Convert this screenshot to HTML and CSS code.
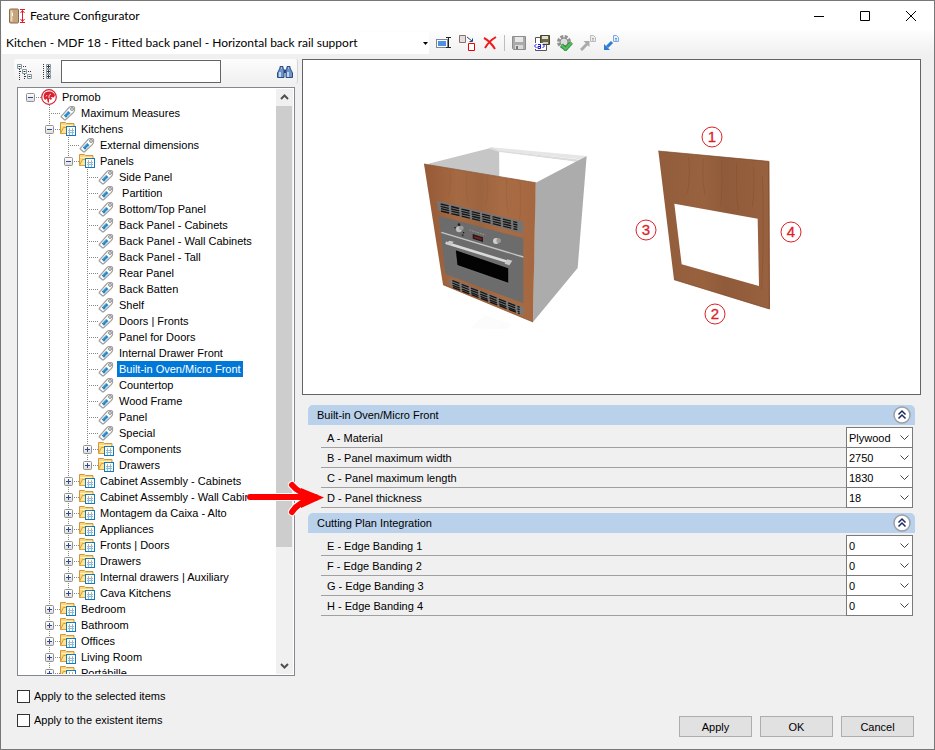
FILE: index.html
```html
<!DOCTYPE html>
<html lang="en">
<head>
<meta charset="UTF-8" />
<meta name="viewport" content="width=device-width, initial-scale=1" />
<title>Feature Configurator</title>
<link rel="stylesheet" href="styles.css">
</head>
<body>

<!-- shared icons -->
<svg class="sprite" aria-hidden="true">
  <linearGradient id="boxFill" x1="0" y1="0" x2="0" y2="1"><stop offset="0" stop-color="#fff"/><stop offset="1" stop-color="#dcdcdc"/></linearGradient>
  <linearGradient id="wood" x1="0" y1="0" x2="1" y2="0"><stop offset="0" stop-color="#955a36"/><stop offset=".3" stop-color="#a56a43"/><stop offset=".5" stop-color="#9c643f"/><stop offset=".7" stop-color="#a86c45"/><stop offset="1" stop-color="#a5673f"/></linearGradient>
  <linearGradient id="wood2" x1="0" y1="0" x2="1" y2="0"><stop offset="0" stop-color="#925d3c"/><stop offset=".4" stop-color="#98623f"/><stop offset=".6" stop-color="#905b3a"/><stop offset="1" stop-color="#98613f"/></linearGradient>
  <symbol id="minus" viewBox="0 0 9 9"><rect x=".5" y=".5" width="8" height="8" rx="1" fill="url(#boxFill)" stroke="#919191"/><path d="M2 4.500h5" stroke="#34488c"/></symbol>
  <symbol id="plus" viewBox="0 0 9 9"><rect x=".5" y=".5" width="8" height="8" rx="1" fill="url(#boxFill)" stroke="#919191"/><path d="M2 4.500h5M4.500 2v5" stroke="#34488c"/></symbol>
  <symbol id="tag" viewBox="0 0 16 16"><path d="M1.200 11.300 9 2.500 10.500 1.500H13.500L14.500 2.500V5.500L13.500 7.500 5.500 14.800H4.500L1.200 12Z" fill="#fdfdfd" stroke="#a0a0a0" stroke-width="1.200"/><circle cx="12" cy="4" r="1.400" fill="#fff" stroke="#808080"/><path d="M3.800 10.500 8.200 6 10.500 8.300 6 12.700Z" fill="#1b82c2"/><path d="m5 10.300 3.400-3.300M7 11l2.500-2.500" stroke="#74b9e2" stroke-width=".8"/></symbol>
  <symbol id="folder" viewBox="0 0 16 16"><path d="M.5 12.500V1.500h5l1 1h7.500V12.500Z" fill="#fbd77c" stroke="#d3963a"/><path d="M1 4.500h12" stroke="#fff0c0"/><path d="M.5 12.500 3.500 6.500H8V12.500Z" fill="#ffe598" stroke="#d89d3c"/><rect x="6.500" y="5.500" width="9" height="9" fill="#fff" stroke="#1479b8"/><path d="M8 9.500h6M8 11.500h6M9.500 8v6M12.500 8v6" stroke="#8dbbd9"/><path d="M9 7.500h1M12 7.500h1" stroke="#f2b43c"/></symbol>
  <symbol id="collapse" viewBox="0 0 18 18"><circle cx="9" cy="9" r="8" fill="#fff" stroke="#9aa0aa" stroke-width="1.500"/><path d="m5.500 8.500 3.500-3.500 3.500 3.500M5.500 12.500 9 9l3.500 3.500" fill="none" stroke="#1b2b62" stroke-width="1.500"/></symbol>
</svg>

<div class="window">
  <header class="titlebar">
    <svg class="app-icon" viewBox="0 0 18 16"><rect x=".5" y="1" width="9" height="14" rx="1" fill="#c6a57e" stroke="#8c6b4d"/><path d="M2.500 2.500v11" stroke="#ead5b9" stroke-width="2"/><path d="M3.500 5v3" stroke="#fff"/><path d="M11 1.500h5M11 14.500h5M13.500 2v12M11.500 5l2-2.500 2 2.500M11.500 11l2 2.500 2-2.500" fill="none" stroke="#df1b2c"/></svg>
    <h1>Feature Configurator</h1>
    <div class="window-buttons">
      <button aria-label="Minimize"><svg viewBox="0 0 10 10"><path d="M0 5.500h10"/></svg></button>
      <button aria-label="Maximize"><svg viewBox="0 0 10 10"><path d="M.5.5h9v9h-9Z"/></svg></button>
      <button aria-label="Close"><svg viewBox="0 0 10 10"><path d="m0 0 10 10M10 0 0 10"/></svg></button>
    </div>
  </header>

  <div class="toolbar">
    <select class="profile" aria-label="Profile">
      <option>Kitchen - MDF 18 - Fitted back panel - Horizontal back rail support</option>
    </select>
    <button aria-label="Rename"><svg viewBox="0 0 16 16"><rect x=".5" y="4.500" width="11" height="8" fill="#fff" stroke="#7c8896"/><rect x="2" y="6" width="8" height="5" fill="#4f8fe4"/><path d="M10 2.500h5M10 12.500h5M12.500 3v9" stroke="#222"/></svg></button>
    <button aria-label="Duplicate"><svg viewBox="0 0 16 16"><path d="M.5.500h6v7h-6Z" fill="#e2dede" stroke="#8a7070"/><path d="M9.500 8.500h6v7h-6Z" fill="#fff" stroke="#f00000"/><path d="m8 2 5 4M13.500 3.500V6.500H10.500" fill="none" stroke="#174b86"/></svg></button>
    <button aria-label="Delete"><svg viewBox="0 0 16 16"><path d="M2 3q6 3 11 11M14 2Q7 6 3 13" fill="none" stroke="#ef1b1b" stroke-width="2"/></svg></button>
    <span class="separator"></span>
    <button aria-label="Save"><svg viewBox="0 0 16 16"><path d="M1.500 1.500h13v13h-12l-1-1Z" fill="#aaa" stroke="#8c8c8c"/><path d="M4 2h8v5H4Z" fill="#e8e8e8"/><path d="M4 10h8v4H4Z" fill="#d9d9d9"/><path d="M5 11h2v3H5Z" fill="#777"/></svg></button>
    <button aria-label="Save as"><svg viewBox="0 0 16 16"><path d="M1.500 2.500h11v13h-11Z" fill="#fff" stroke="#555"/><path d="M6.500.500h9v9h-9Z" fill="#6b6b3d" stroke="#44442a"/><path d="M8 1h6v3H8Z" fill="#ddd"/><path d="M9 7h5v2H9Z" fill="#ccc"/><path d="M0 8h9v6H0Z" fill="#fff"/><path d="m2.500 9-2 2 2 2M8.500 9l2 2-2 2M4 9.500h2.500v4H4v-2h2" fill="none" stroke="#1414e0"/></svg></button>
    <button aria-label="Validate"><svg viewBox="0 0 16 16"><circle cx="7" cy="7" r="5.500" fill="none" stroke="#929292" stroke-width="3" stroke-dasharray="3 1.320"/><circle cx="7" cy="7" r="4" fill="#ddd" stroke="#888"/><path d="m4.500 10 4 4L14.500 7.500" fill="none" stroke="#2b8f38" stroke-width="4"/><path d="m4.500 10 4 4L14.500 7.500" fill="none" stroke="#57c05e" stroke-width="2"/></svg></button>
    <button aria-label="Import"><svg viewBox="0 0 16 16"><path d="m1 15 6-6" stroke="#aaa" stroke-width="3"/><path d="M3.500 6h6v6Z" fill="#aaa"/><path d="M10.500.500h3l2 2v4h-5Z" fill="#eee" stroke="#bbb"/><path d="M12 3.500h2M12 5h2" stroke="#aaa"/></svg></button>
    <button aria-label="Export"><svg viewBox="0 0 16 16"><path d="m9 7-5 5" stroke="#2e7bd6" stroke-width="3"/><path d="M1 9v6h6Z" fill="#2e7bd6"/><path d="M10.500.500h3l2 2v4h-5Z" fill="#e5f1ff" stroke="#7ba8e0"/><path d="M12 3.500h2M12 5h2" stroke="#6397da"/></svg></button>
  </div>

  <main class="content">
    <aside class="sidebar">
      <div class="search-bar">
        <button aria-label="Collapse all"><svg viewBox="0 0 16 16"><path d="M.500.500h4v4h-4ZM5.500 5.500h4v4h-4ZM10.500 10.500h4v4h-4Z" fill="#fff" stroke="#8599a6"/><path d="M1.500 2.500h2M6.500 7.500h2M11.500 12.500h2" stroke="#333"/><path d="M6 2.500h3M11 7.500h3M2.500 5v11M7.500 10v6M3 7.500h2M8 12.500h2" stroke="#333" stroke-dasharray="1 1"/></svg></button>
        <button aria-label="Expand all"><svg viewBox="0 0 16 16"><path d="M5.500.500h4v4h-4ZM5.500 5.500h4v4h-4ZM5.500 10.500h4v4h-4Z" fill="#fff" stroke="#8599a6"/><path d="M6 2.500h3M7.500 1v3M6 7.500h3M7.500 6v3M6 12.500h3M7.500 11v3" stroke="#333"/><path d="M2.500 0v15" stroke="#333" stroke-dasharray="1 1"/></svg></button>
        <input type="text" aria-label="Search">
        <button class="find" aria-label="Find"><svg viewBox="0 0 16 16"><path d="M.5 13.500V9L3 4V2.500h3V5h1v8.500ZM15.500 13.500V9L13 4V2.500h-3V5H9v8.500Z" fill="#6f93c8" stroke="#2b4c85"/><path d="M7 6h2v3H7Z" fill="#27477f"/><path d="M3 8v5M11 8v5" stroke="#dceafb" stroke-width="1.500"/><path d="M4 4h1M11 4h1" stroke="#dceafb"/></svg></button>
      </div>

      <div class="tree-box">
        <ul class="tree">
          <li>
            <div class="node"><button class="toggle" aria-label="Collapse"><svg><use href="#minus"/></svg></button><svg class="icon" viewBox="0 0 16 16"><circle cx="8" cy="8" r="7.300" fill="#fff" stroke="#d8202e" stroke-width="1.200"/><path d="M7 2.500C2.500 3 1.500 8 4 11L6 9.500 6.500 12.500 8 14V9.500l2 1.500 1-1.500-1.500-1.500 3.500.500L14 6 12.500 4 10 2.500Z" fill="#d8202e"/><path d="M8 9V6.500L10 5M6 6 5 7.500" fill="none" stroke="#fff" stroke-width=".8"/></svg><span>Promob</span></div>
            <ul>
              <li><div class="node leaf"><svg class="icon"><use href="#tag"/></svg><span>Maximum Measures</span></div></li>
              <li>
                <div class="node"><button class="toggle" aria-label="Collapse"><svg><use href="#minus"/></svg></button><svg class="icon"><use href="#folder"/></svg><span>Kitchens</span></div>
                <ul>
                  <li><div class="node leaf"><svg class="icon"><use href="#tag"/></svg><span>External dimensions</span></div></li>
                  <li>
                    <div class="node"><button class="toggle" aria-label="Collapse"><svg><use href="#minus"/></svg></button><svg class="icon"><use href="#folder"/></svg><span>Panels</span></div>
                    <ul>
                      <li><div class="node leaf"><svg class="icon"><use href="#tag"/></svg><span>Side Panel</span></div></li>
                      <li><div class="node leaf"><svg class="icon"><use href="#tag"/></svg><span>&nbsp;Partition</span></div></li>
                      <li><div class="node leaf"><svg class="icon"><use href="#tag"/></svg><span>Bottom/Top Panel</span></div></li>
                      <li><div class="node leaf"><svg class="icon"><use href="#tag"/></svg><span>Back Panel - Cabinets</span></div></li>
                      <li><div class="node leaf"><svg class="icon"><use href="#tag"/></svg><span>Back Panel - Wall Cabinets</span></div></li>
                      <li><div class="node leaf"><svg class="icon"><use href="#tag"/></svg><span>Back Panel - Tall</span></div></li>
                      <li><div class="node leaf"><svg class="icon"><use href="#tag"/></svg><span>Rear Panel</span></div></li>
                      <li><div class="node leaf"><svg class="icon"><use href="#tag"/></svg><span>Back Batten</span></div></li>
                      <li><div class="node leaf"><svg class="icon"><use href="#tag"/></svg><span>Shelf</span></div></li>
                      <li><div class="node leaf"><svg class="icon"><use href="#tag"/></svg><span>Doors | Fronts</span></div></li>
                      <li><div class="node leaf"><svg class="icon"><use href="#tag"/></svg><span>Panel for Doors</span></div></li>
                      <li><div class="node leaf"><svg class="icon"><use href="#tag"/></svg><span>Internal Drawer Front</span></div></li>
                      <li><div class="node leaf selected"><svg class="icon"><use href="#tag"/></svg><span>Built-in Oven/Micro Front</span></div></li>
                      <li><div class="node leaf"><svg class="icon"><use href="#tag"/></svg><span>Countertop</span></div></li>
                      <li><div class="node leaf"><svg class="icon"><use href="#tag"/></svg><span>Wood Frame</span></div></li>
                      <li><div class="node leaf"><svg class="icon"><use href="#tag"/></svg><span>Panel</span></div></li>
                      <li><div class="node leaf"><svg class="icon"><use href="#tag"/></svg><span>Special</span></div></li>
                      <li><div class="node"><button class="toggle" aria-label="Expand"><svg><use href="#plus"/></svg></button><svg class="icon"><use href="#folder"/></svg><span>Components</span></div></li>
                      <li><div class="node"><button class="toggle" aria-label="Expand"><svg><use href="#plus"/></svg></button><svg class="icon"><use href="#folder"/></svg><span>Drawers</span></div></li>
                    </ul>
                  </li>
                  <li><div class="node"><button class="toggle" aria-label="Expand"><svg><use href="#plus"/></svg></button><svg class="icon"><use href="#folder"/></svg><span>Cabinet Assembly - Cabinets</span></div></li>
                  <li><div class="node"><button class="toggle" aria-label="Expand"><svg><use href="#plus"/></svg></button><svg class="icon"><use href="#folder"/></svg><span>Cabinet Assembly - Wall Cabinets</span></div></li>
                  <li><div class="node"><button class="toggle" aria-label="Expand"><svg><use href="#plus"/></svg></button><svg class="icon"><use href="#folder"/></svg><span>Montagem da Caixa - Alto</span></div></li>
                  <li><div class="node"><button class="toggle" aria-label="Expand"><svg><use href="#plus"/></svg></button><svg class="icon"><use href="#folder"/></svg><span>Appliances</span></div></li>
                  <li><div class="node"><button class="toggle" aria-label="Expand"><svg><use href="#plus"/></svg></button><svg class="icon"><use href="#folder"/></svg><span>Fronts | Doors</span></div></li>
                  <li><div class="node"><button class="toggle" aria-label="Expand"><svg><use href="#plus"/></svg></button><svg class="icon"><use href="#folder"/></svg><span>Drawers</span></div></li>
                  <li><div class="node"><button class="toggle" aria-label="Expand"><svg><use href="#plus"/></svg></button><svg class="icon"><use href="#folder"/></svg><span>Internal drawers | Auxiliary</span></div></li>
                  <li><div class="node"><button class="toggle" aria-label="Expand"><svg><use href="#plus"/></svg></button><svg class="icon"><use href="#folder"/></svg><span>Cava Kitchens</span></div></li>
                </ul>
              </li>
              <li><div class="node"><button class="toggle" aria-label="Expand"><svg><use href="#plus"/></svg></button><svg class="icon"><use href="#folder"/></svg><span>Bedroom</span></div></li>
              <li><div class="node"><button class="toggle" aria-label="Expand"><svg><use href="#plus"/></svg></button><svg class="icon"><use href="#folder"/></svg><span>Bathroom</span></div></li>
              <li><div class="node"><button class="toggle" aria-label="Expand"><svg><use href="#plus"/></svg></button><svg class="icon"><use href="#folder"/></svg><span>Offices</span></div></li>
              <li><div class="node"><button class="toggle" aria-label="Expand"><svg><use href="#plus"/></svg></button><svg class="icon"><use href="#folder"/></svg><span>Living Room</span></div></li>
              <li><div class="node"><button class="toggle" aria-label="Expand"><svg><use href="#plus"/></svg></button><svg class="icon"><use href="#folder"/></svg><span>Portábille</span></div></li>
            </ul>
          </li>
        </ul>
        <div class="scrollbar">
          <svg viewBox="0 0 17 17"><path d="m5 10 3.500-3.500L12 10"/></svg>
          <div class="track"><div class="thumb"></div></div>
          <svg viewBox="0 0 17 17"><path d="m5 7 3.500 3.500L12 7"/></svg>
        </div>
      </div>
    </aside>

    <section class="details">
      <div class="preview">
        <svg viewBox="303 60 617 334" role="img" aria-label="Built-in oven front with numbered edges">
          <!-- cabinet -->
          <g transform="translate(410 120) scale(.33333)">
            <path d="M180 625 225 585 305 612 290 628Z" fill="#fcfcfc"/>
            <path d="M55 131 245 83 268 91V170L62 136Z" fill="#c6c6c6"/>
            <path d="m245 82 25 9 240 28-13 6-229-29-35-11Z" fill="#dcdcdc"/>
            <path d="m245 82 284 26-20 10-242-26Z" fill="#e6e6e6"/>
            <path d="m268 97 220 27-110 63-108-17Z" fill="#fff"/>
            <path d="m376 189 154-81-27 336-134 162Z" fill="#acacac"/>
            <path d="m42 132 335 56-8 418-270-112Z" fill="url(#wood)"/>
            <path d="m42 132 335 56M369 606 99 494" stroke="#80492b" stroke-width="2"/>
            <path d="M120 148q5 40-4 80M170 157q-4 60 5 90M230 167q8 50-4 90M290 177q-3 60 5 100M330 184q5 80-2 120" fill="none" stroke="#8a5230" stroke-width="3" opacity=".25"/>
            <path d="m80 242 260 63-1 36L86 272Z" fill="#757575"/>
            <path d="m92 252 230 56M92 259l230 56M93 266l229 56M93 273l229 56" stroke="#151515" stroke-width="4" stroke-dasharray="25 7"/>
            <path d="m86 287 254 68v195L106 462Z" fill="#6c6c6c"/>
            <path d="m94 337 246 74" stroke="#c6c6c6" stroke-width="4"/>
            <path d="m188 342 31 10v14l-31-10Z" fill="#2b1516"/><path d="m193 348 22 7v6l-22-7Z" fill="#6d2525"/>
            <circle cx="147" cy="328" r="9" fill="#c1c1c1"/><circle cx="154" cy="324" r="7" fill="#999"/>
            <circle cx="258" cy="363" r="9" fill="#d0d0d0"/><circle cx="266" cy="362" r="7" fill="#999"/>
            <path d="m179 330 47 15" stroke="#999" stroke-width="3" stroke-dasharray="5 3"/>
            <circle cx="147" cy="314" r="4" fill="#222"/><circle cx="135" cy="323" r="2"/><circle cx="161" cy="338" r="2"/><circle cx="158" cy="346" r="3" fill="#333"/>
            <path d="m136 389 160 55v46l-155-54Z" fill="#030303" stroke="#838383" stroke-width="2"/>
            <path d="m107 368 190 59" stroke="#dadada" stroke-width="8"/>
            <path d="m107 370 12-8 12 3-7 11Zm177 61 8-13 15 4-9 14Z" fill="#c9c9c9"/>
            <path d="m118 475 224 88-2 23-220-90Z" fill="#797979"/>
            <path d="m127 482 202 80M127 489l202 80M128 496l201 80M129 502l200 79" stroke="#151515" stroke-width="4" stroke-dasharray="23 7"/>
          </g>
          <!-- front panel -->
          <g transform="translate(620 110) scale(.33333)">
            <path fill-rule="evenodd" d="m115 123 333 31 2 444-288-89ZM163 281l22 182 232 65-4-202Z" fill="url(#wood2)"/>
            <path d="m115 123 331 31M446 155l2 442M162 509l286 88" fill="none" stroke="#7b472b" stroke-width="2"/>
            <path d="M205 140q8 50-3 110M250 145q-5 60 5 110M305 150q5 70-3 140M350 160q-3 80 5 140M400 170q5 50-3 120M427 200q6 150-2 340" fill="none" stroke="#704026" stroke-width="3" opacity=".25"/>
          </g>
          <g class="marks">
            <circle cx="712" cy="137" r="10"/><text x="712" y="142">1</text>
            <circle cx="715" cy="314" r="10"/><text x="715" y="319">2</text>
            <circle cx="646" cy="230" r="10"/><text x="646" y="235">3</text>
            <circle cx="791" cy="232" r="10"/><text x="791" y="237">4</text>
          </g>
        </svg>
      </div>

      <div class="group">
        <h2>Built-in Oven/Micro Front <button aria-label="Collapse group"><svg><use href="#collapse"/></svg></button></h2>
        <div class="property"><label for="material">A - Material</label><select id="material"><option>Plywood</option></select></div>
        <div class="property"><label for="width">B - Panel maximum width</label><select id="width"><option>2750</option></select></div>
        <div class="property"><label for="length">C - Panel maximum length</label><select id="length"><option>1830</option></select></div>
        <div class="property">
          <svg class="pointer" viewBox="0 0 78 38" aria-hidden="true">
            <path d="M3 17h60M45 5Q52 14 70 17.500 52 21 45 32" fill="none" stroke="#fff" stroke-width="8" stroke-linecap="round"/>
            <path d="M3 17h60M45 5Q52 14 70 17.500 52 21 45 32" fill="none" stroke="#f00" stroke-width="6" stroke-linecap="round"/>
            <path d="m54 8 23 9.500L54 28Z" fill="#f00"/>
          </svg>
          <label for="thickness">D - Panel thickness</label><select id="thickness"><option>18</option></select>
        </div>
      </div>

      <div class="group">
        <h2>Cutting Plan Integration <button aria-label="Collapse group"><svg><use href="#collapse"/></svg></button></h2>
        <div class="property"><label for="edge1">E - Edge Banding 1</label><select id="edge1"><option>0</option></select></div>
        <div class="property"><label for="edge2">F - Edge Banding 2</label><select id="edge2"><option>0</option></select></div>
        <div class="property"><label for="edge3">G - Edge Banding 3</label><select id="edge3"><option>0</option></select></div>
        <div class="property"><label for="edge4">H - Edge Banding 4</label><select id="edge4"><option>0</option></select></div>
      </div>
    </section>
  </main>

  <footer class="footer">
    <div class="options">
      <label><input type="checkbox"> Apply to the selected items</label>
      <label><input type="checkbox"> Apply to the existent items</label>
    </div>
    <div class="actions">
      <button>Apply</button>
      <button>OK</button>
      <button>Cancel</button>
    </div>
  </footer>
</div>

</body>
</html>
```

FILE: styles.css
```css
* {
  box-sizing: border-box;
}
body {
  margin: 0;
  font-family: "Liberation Sans", Arial, sans-serif;
  font-size: 11px;
  line-height: 16px;
  color: #000;
}
button, input, select {
  font: inherit;
  color: inherit;
  margin: 0;
}
button {
  padding: 0;
  border: none;
  background: none;
}
svg {
  display: block;
}
ul {
  list-style: none;
  margin: 0;
  padding: 0;
}
.sprite {
  position: absolute;
  width: 0;
  height: 0;
}
.window {
  display: flex;
  flex-direction: column;
  height: 100vh;
  border: 1px solid #777;
  background: #f0f0f0;
}

/* title bar */
.titlebar {
  display: flex;
  align-items: center;
  flex: none;
  height: 30px;
  padding-left: 8px;
  background: #fff;
}
.titlebar h1 {
  flex: 1;
  margin: 0 0 0 3px;
  font: 12px/16px Lato, sans-serif;
}
.app-icon {
  width: 18px;
  height: 16px;
}
.window-buttons {
  display: flex;
}
.window-buttons button {
  width: 46px;
  height: 28px;
}
.window-buttons svg {
  width: 10px;
  height: 10px;
  margin: auto;
  fill: none;
  stroke: #000;
  overflow: visible;
}

/* toolbar */
.toolbar {
  display: flex;
  align-items: center;
  flex: none;
  gap: 7px;
  height: 24px;
  padding-left: 1px;
  background: linear-gradient(#fdfdfd, #f0f0f0);
}
.toolbar svg {
  width: 16px;
  height: 16px;
}
.profile {
  appearance: none;
  width: 427px;
  height: 22px;
  padding: 0 20px 0 4px;
  border: none;
  font: 12px/16px Lato, sans-serif;
  background: #fff url("data:image/svg+xml,%3Csvg xmlns='http://www.w3.org/2000/svg' width='5' height='3'%3E%3Cpath d='M0 0h5L2.500 3z'/%3E%3C/svg%3E") no-repeat right 1px center;
}
.separator {
  width: 1px;
  height: 16px;
  margin: 0 -1px;
  background: #bdbdbd;
}

/* body */
.content {
  display: flex;
  flex: 1;
  min-height: 0;
  gap: 4px;
  padding: 4px 13px 0;
}
.sidebar {
  display: flex;
  flex-direction: column;
  flex: none;
  width: 284px;
}
.search-bar {
  display: flex;
  align-items: center;
  height: 25px;
  margin-bottom: 3px;
  padding: 0 4px 0 3px;
  border-right: 1px solid #d5d5d5;
  border-radius: 3px;
  background: linear-gradient(#fcfcfc, #f0f0f0);
}
.search-bar svg {
  width: 16px;
  height: 16px;
}
.search-bar button + button {
  margin-left: 8px;
}
.search-bar input {
  width: 160px;
  height: 23px;
  margin-left: 4px;
  padding: 0 4px;
  border: 1px solid #646464;
  background: #fff;
}
.search-bar .find {
  margin-left: auto;
}

/* tree */
.tree-box {
  display: flex;
  flex: 1;
  min-height: 0;
  margin: 0 3px;
  border: 1px solid #828790;
  padding: 1px;
  background: #fff;
}
.tree {
  flex: 1;
  min-width: 0;
  padding-left: 7px;
  overflow: hidden;
}
.tree ul {
  padding-left: 19px;
}
.tree ul > li {
  background: repeating-linear-gradient(#888 0 1px, transparent 1px 2px) 4px 0 / 1px 100% no-repeat;
}
.tree ul > li:last-child {
  background-size: 1px 8px;
}
.node {
  display: flex;
  align-items: center;
  height: 16px;
  white-space: nowrap;
  background: repeating-linear-gradient(90deg, #888 0 1px, transparent 1px 2px) 4px 8px / 12px 1px no-repeat;
}
.node.leaf {
  padding-left: 9px;
}
.toggle,
.toggle svg {
  width: 9px;
  height: 9px;
}
.node .icon {
  flex: none;
  width: 16px;
  height: 16px;
  margin: 0 3px 0 6px;
}
.node span {
  padding: 0 2px;
}
.selected span {
  background: #0078d7;
  color: #fff;
}
.scrollbar {
  display: flex;
  flex-direction: column;
  width: 17px;
  background: #f0f0f0;
}
.scrollbar svg {
  width: 17px;
  height: 17px;
  fill: none;
  stroke: #505050;
  stroke-width: 2;
}
.track {
  flex: 1;
}
.thumb {
  height: 80%;
  margin-right: 1px;
  background: #cdcdcd;
}

/* right side */
.details {
  flex: 1;
  min-width: 0;
}
.preview {
  margin-bottom: 10px;
  border: 1px solid #646464;
  background: #fff;
}
.preview svg {
  width: 100%;
}
.marks circle {
  fill: none;
  stroke: #e02028;
}
.marks text {
  fill: #e02028;
  stroke: #e02028;
  stroke-width: .3px;
  font-size: 15px;
  text-anchor: middle;
}
.group {
  margin: 0 6px 6px;
}
.group h2 {
  display: flex;
  align-items: center;
  justify-content: space-between;
  height: 20px;
  margin: 0 0 2px;
  padding: 0 4px 0 9px;
  border-radius: 5px 5px 0 0;
  background: #b9d1ea;
  font-size: 11px;
  font-weight: normal;
}
.group h2 svg {
  width: 18px;
  height: 18px;
}
.property {
  position: relative;
  display: flex;
  height: 20px;
  margin: 0 2px 0 13px;
}
.property label {
  flex: 1;
  height: 21px;
  padding: 3px 6px 0;
  border-bottom: 1px solid #a0a0a0;
}
.property select {
  appearance: none;
  width: 67px;
  height: 21px;
  padding: 0 18px 0 2px;
  border: 1px solid #7a7a7a;
  border-radius: 0;
  background: #fff url("data:image/svg+xml,%3Csvg xmlns='http://www.w3.org/2000/svg' width='9' height='5'%3E%3Cpath d='m.5.5 4 4 4-4' fill='none' stroke='%23444'/%3E%3C/svg%3E") no-repeat right 3px center;
}
.pointer {
  position: absolute;
  left: -74px;
  top: -7px;
  width: 78px;
  height: 38px;
}

/* footer */
.footer {
  display: flex;
  justify-content: space-between;
  align-items: flex-end;
  flex: none;
  height: 73px;
  padding: 0 20px 12px 16px;
}
.options {
  display: flex;
  flex-direction: column;
  gap: 8px;
  margin-bottom: 9px;
}
.options label {
  display: flex;
  align-items: center;
  gap: 4px;
}
.options input {
  appearance: none;
  width: 13px;
  height: 13px;
  border: 1px solid #333;
  background: #fff;
}
.actions {
  display: flex;
  gap: 8px;
}
.actions button {
  width: 73px;
  height: 21px;
  border: 1px solid #adadad;
  background: #e1e1e1;
}
```
